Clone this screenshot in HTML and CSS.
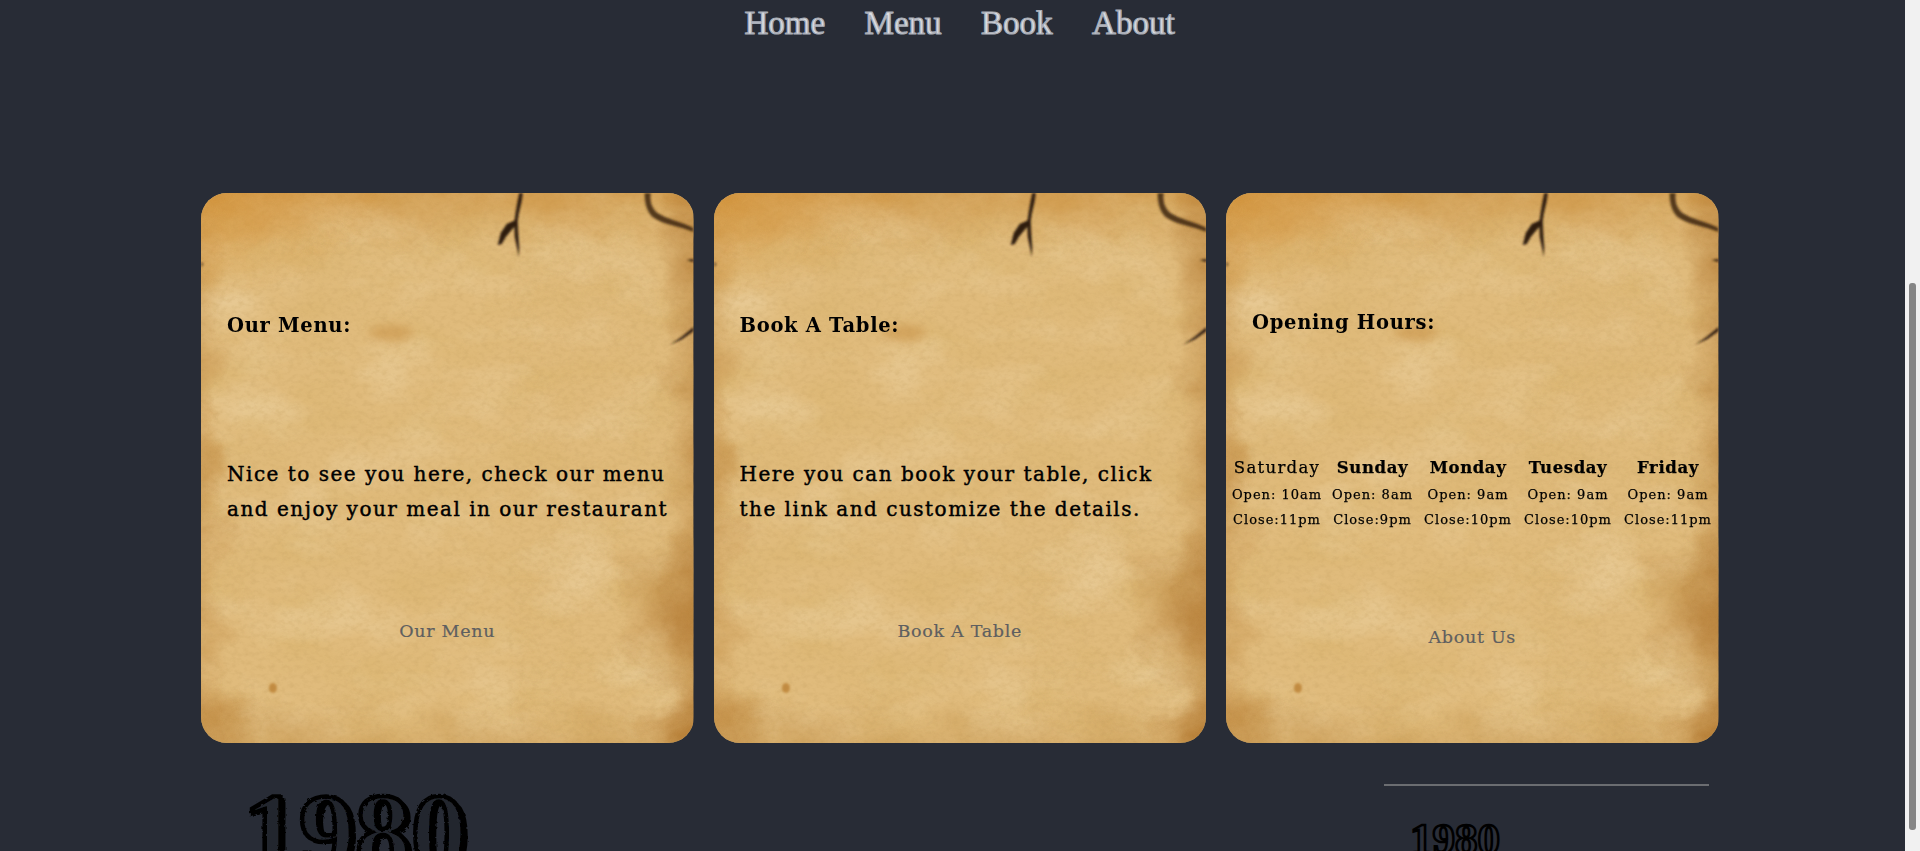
FILE: index.html
```html
<!DOCTYPE html>
<html lang="en">
<head>
<meta charset="utf-8">
<title>1980</title>
<link rel="stylesheet" href="styles.css">
</head>
<body>
<svg class="defs" width="0" height="0" aria-hidden="true">
  <defs>
    <radialGradient id="gTL" cx="0" cy="0" r="1"><stop offset="0" stop-color="#d58d2c" stop-opacity=".8"/><stop offset="1" stop-color="#d58d2c" stop-opacity="0"/></radialGradient>
    <linearGradient id="gTop" x1="0" y1="0" x2="0" y2="1"><stop offset="0" stop-color="#c98a35" stop-opacity=".8"/><stop offset=".55" stop-color="#c98a35" stop-opacity=".5"/><stop offset="1" stop-color="#c98a35" stop-opacity="0"/></linearGradient>
    <linearGradient id="gLeft" x1="0" y1="0" x2="1" y2="0"><stop offset="0" stop-color="#b87c30" stop-opacity=".65"/><stop offset=".6" stop-color="#b87c30" stop-opacity=".35"/><stop offset="1" stop-color="#b87c30" stop-opacity="0"/></linearGradient>
    <linearGradient id="gRight" x1="1" y1="0" x2="0" y2="0"><stop offset="0" stop-color="#a8691f" stop-opacity=".7"/><stop offset=".55" stop-color="#a8691f" stop-opacity=".45"/><stop offset="1" stop-color="#a8691f" stop-opacity="0"/></linearGradient>
    <linearGradient id="gBottom" x1="0" y1="1" x2="0" y2="0"><stop offset="0" stop-color="#b98438" stop-opacity=".55"/><stop offset=".5" stop-color="#b98438" stop-opacity=".35"/><stop offset="1" stop-color="#b98438" stop-opacity="0"/></linearGradient>
    <radialGradient id="gBR"><stop offset="0" stop-color="#a8691f" stop-opacity=".5"/><stop offset="1" stop-color="#a8691f" stop-opacity="0"/></radialGradient>
    <radialGradient id="gBL"><stop offset="0" stop-color="#b5782a" stop-opacity=".4"/><stop offset="1" stop-color="#b5782a" stop-opacity="0"/></radialGradient>
    <filter id="blotch" x="0" y="0" width="100%" height="100%">
      <feTurbulence type="fractalNoise" baseFrequency=".014 .024" numOctaves="5" seed="11"/>
      <feColorMatrix values="0 0 0 0 .70  0 0 0 0 .46  0 0 0 0 .16  2.4 0 0 0 -1.02"/>
    </filter>
    <filter id="light" x="0" y="0" width="100%" height="100%">
      <feTurbulence type="fractalNoise" baseFrequency=".012 .02" numOctaves="5" seed="4"/>
      <feColorMatrix values="0 0 0 0 .93  0 0 0 0 .80  0 0 0 0 .56  0 2.2 0 0 -1"/>
    </filter>
    <filter id="grain" x="0" y="0" width="100%" height="100%">
      <feTurbulence type="fractalNoise" baseFrequency=".16 .22" numOctaves="3" seed="7"/>
      <feColorMatrix values="0 0 0 0 .55  0 0 0 0 .35  0 0 0 0 .12  2 0 0 0 -.85"/>
    </filter>
    <filter id="warp" filterUnits="userSpaceOnUse" x="-60" y="-60" width="613" height="670" color-interpolation-filters="sRGB">
      <feTurbulence type="fractalNoise" baseFrequency=".016 .02" numOctaves="4" seed="21" result="n"/>
      <feDisplacementMap in="SourceGraphic" in2="n" scale="60" xChannelSelector="R" yChannelSelector="G"/>
    </filter>
    <filter id="soft" x="-20%" y="-20%" width="140%" height="140%"><feGaussianBlur stdDeviation=".8"/></filter>
    <filter id="soft2" x="-50%" y="-50%" width="200%" height="200%"><feGaussianBlur stdDeviation="5"/></filter>
    <filter id="rough" x="-5%" y="-5%" width="110%" height="110%">
      <feTurbulence type="fractalNoise" baseFrequency=".3" numOctaves="2" seed="3" result="n"/>
      <feDisplacementMap in="SourceGraphic" in2="n" scale="3"/>
    </filter>
    <symbol id="paper" viewBox="0 0 493 550" preserveAspectRatio="none">
      <rect width="493" height="550" fill="#e0bb7c"/>
      <rect width="493" height="550" filter="url(#blotch)" opacity=".6"/>
      <rect width="493" height="550" filter="url(#light)" opacity=".3"/>
      <rect width="493" height="550" filter="url(#grain)" opacity=".3"/>
      <g filter="url(#warp)">
        <rect x="-60" y="-60" width="613" height="115" fill="url(#gTop)"/>
        <rect x="-60" y="-60" width="85" height="670" fill="url(#gLeft)"/>
        <rect x="460" y="-60" width="95" height="670" fill="url(#gRight)"/>
        <rect x="-60" y="510" width="613" height="100" fill="url(#gBottom)"/>
        <rect x="-60" y="-60" width="280" height="170" fill="url(#gTL)"/>
        <ellipse cx="480" cy="420" rx="70" ry="85" fill="url(#gBR)"/>
        <ellipse cx="490" cy="540" rx="50" ry="50" fill="url(#gBR)"/>
        <ellipse cx="5" cy="535" rx="55" ry="55" fill="url(#gBL)"/>
        <ellipse cx="5" cy="270" rx="26" ry="70" fill="url(#gBL)" opacity=".7"/>
      </g>
      <ellipse cx="190" cy="140" rx="22" ry="8" fill="#c58a3c" opacity=".45" filter="url(#soft2)"/>
      <ellipse cx="72" cy="495" rx="4" ry="5" fill="#bd8438" opacity=".85" filter="url(#soft)"/>
      <g filter="url(#soft)" fill="#2e1e10">
        <path d="M322 0l-1 8-3 13-1 7 .5 12 1 15-.5 9-1.500-8-2.500-12-.5-14 1-8 2-12 2-10z"/>
        <path d="M317 26l-11 5-6 9-3 12 4-1 4-7 5-6 7-8z"/>
        <path d="M450 0c-1 10 2 16 7 20 9 6 22 8 36 15v4c-14-6-30-7-41-15-6-6-8-14-8-24z" fill="#3d2712" opacity=".85"/>
        <path d="M486 67l7-1v3z"/>
        <path d="M469 152l12-8 12-10v4l-11 8z"/>
        <path d="M0 69l3 2-3 3z" opacity=".6"/>
      </g>
    </symbol>
  </defs>
</svg>

<div class="window">
  <main class="page">
    <nav class="nav">
      <a class="nav-link" href="#">Home</a>
      <a class="nav-link" href="#">Menu</a>
      <a class="nav-link" href="#">Book</a>
      <a class="nav-link" href="#">About</a>
    </nav>

    <section class="cards">
      <article class="card">
        <svg class="paper" aria-hidden="true"><use href="#paper"/></svg>
        <h2 class="card-title">Our Menu:</h2>
        <p class="card-text">Nice to see you here, check our menu<br>and enjoy your meal in our restaurant</p>
        <a class="card-link" href="#">Our Menu</a>
      </article>
      <article class="card">
        <svg class="paper" aria-hidden="true"><use href="#paper"/></svg>
        <h2 class="card-title">Book A Table:</h2>
        <p class="card-text">Here you can book your table, click<br>the link and customize the details.</p>
        <a class="card-link" href="#">Book A Table</a>
      </article>
      <article class="card card-hours">
        <svg class="paper" aria-hidden="true"><use href="#paper"/></svg>
        <h2 class="card-title">Opening Hours:</h2>
        <div class="hours">
          <div class="day"><h3 class="day-name day-name-plain">Saturday</h3><span>Open: 10am</span><span>Close:11pm</span></div>
          <div class="day"><h3 class="day-name">Sunday</h3><span>Open: 8am</span><span>Close:9pm</span></div>
          <div class="day"><h3 class="day-name">Monday</h3><span>Open: 9am</span><span>Close:10pm</span></div>
          <div class="day"><h3 class="day-name">Tuesday</h3><span>Open: 9am</span><span>Close:10pm</span></div>
          <div class="day"><h3 class="day-name">Friday</h3><span>Open: 9am</span><span>Close:11pm</span></div>
        </div>
        <a class="card-link" href="#">About Us</a>
      </article>
    </section>

    <footer class="footer">
      <div class="brand">1980</div>
      <div class="footer-side">
        <hr class="rule">
        <div class="brand-small">1980</div>
      </div>
    </footer>
  </main>
  <aside class="scrollbar" aria-hidden="true"><div class="thumb"></div></aside>
</div>
</body>
</html>
```

FILE: styles.css
```css
* { box-sizing: border-box; }

html, body {
  margin: 0;
  height: 100%;
  overflow: hidden;
}

body {
  background: #282c36;
  font-family: "DejaVu Serif", "Liberation Serif", serif;
}

.defs { display: block; height: 0; }

.window {
  display: flex;
  height: 851px;
}

.page {
  flex: 1;
  min-width: 0;
  overflow: hidden;
}

/* nav */
.nav {
  display: flex;
  justify-content: center;
  gap: 39.5px;
  height: 46px;
  padding-left: 14px;
  align-items: center;
}

.nav-link {
  font-family: "Liberation Serif", "Times New Roman", serif;
  font-size: 33px;
  line-height: 46px;
  color: #dcdee2;
  text-decoration: none;
  -webkit-text-stroke: 1.2px #a9adb6;
  text-shadow: 1px 0 0 rgba(90, 150, 210, .4);
}

/* cards */
.cards {
  display: flex;
  gap: 20px;
  margin-top: 147px;
  padding-left: 201px;
}

.card {
  position: relative;
  display: flex;
  flex-direction: column;
  width: 492.5px;
  height: 550px;
  padding: 120px 10px 0 26px;
  border-radius: 26px;
  overflow: hidden;
  color: #000;
}

.paper {
  position: absolute;
  inset: 0;
  width: 100%;
  height: 100%;
}

.card > :not(.paper) { position: relative; }

.card-title {
  margin: 0;
  font-size: 19.5px;
  line-height: 26px;
  font-weight: 700;
  letter-spacing: .7px;
}

.card-text {
  margin: 118px 0 0;
  font-size: 20px;
  line-height: 35px;
  letter-spacing: 1.5px;
  white-space: nowrap;
  -webkit-text-stroke: .45px #000;
}

.card-link {
  margin-top: 92px;
  align-self: center;
  margin-left: -16px;
  font-size: 17.500px;
  line-height: 24px;
  letter-spacing: .7px;
  color: #5e5f60;
  text-decoration: none;
  -webkit-text-stroke: .2px #5e5f60;
}

.card-hours { padding-top: 117px; }

.hours {
  display: grid;
  grid-template-columns: 88px 79px 88px 88px 88px;
  column-gap: 12px;
  margin: 0 -10px 0 -26px;
  padding: 118px 0 0 7px;
}

.day {
  display: flex;
  flex-direction: column;
  align-items: center;
  font-size: 13px;
  line-height: 25px;
  letter-spacing: 1px;
  white-space: nowrap;
  -webkit-text-stroke: .25px #000;
}

.day-name {
  margin: 0;
  font-size: 16.500px;
  line-height: 28px;
  font-weight: 700;
  letter-spacing: .6px;
}

.day-name-plain {
  font-weight: 400;
  letter-spacing: 1.300px;
}

.card-hours .card-link { margin-top: 93px; }

/* footer */
.footer {
  display: flex;
  justify-content: space-between;
  align-items: flex-start;
  padding: 34px 196px 0 243px;
}

.brand {
  font-family: "Liberation Serif", "Times New Roman", serif;
  font-size: 112px;
  line-height: 112px;
  font-weight: 700;
  color: #23262e;
  -webkit-text-stroke: 4.5px #000;
  text-shadow: 5px 2px 0 #000;
  filter: url(#rough);
}

.footer-side {
  width: 325px;
  padding-top: 7px;
}

.rule {
  height: 2px;
  margin: 0;
  border: 0;
  background: #6b6d71;
}

.brand-small {
  margin: 31px 0 0 26px;
  font-family: "Liberation Serif", "Times New Roman", serif;
  font-size: 45px;
  line-height: 44px;
  font-weight: 700;
  color: #2b2f39;
  -webkit-text-stroke: 2.5px #000;
}

/* window scrollbar, drawn as seen in the screenshot */
.scrollbar {
  flex: none;
  width: 15px;
  padding: 283px 4px 21px;
  background: #f1f1f1;
}

.thumb {
  height: 100%;
  border-radius: 3px;
  background: #858585;
}
```
